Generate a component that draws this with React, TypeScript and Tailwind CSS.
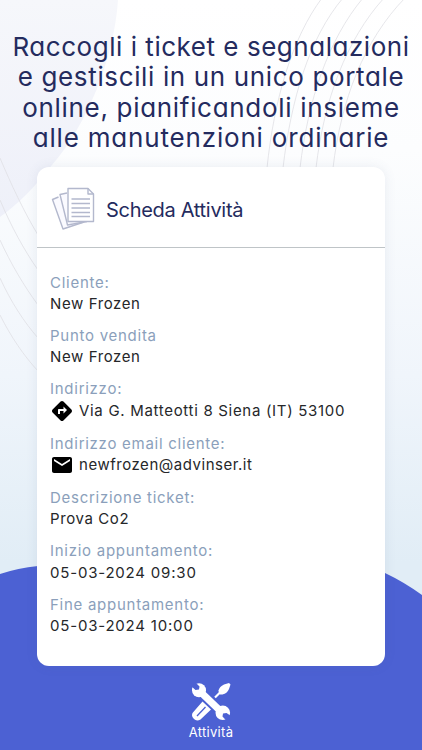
import React from 'react';
import { MdDirections, MdEmail } from 'react-icons/md';

const title = [
  { text: 'Raccogli i ticket e segnalazioni', cls: 'tracking-[0.53px]' },
  { text: 'e gestiscili in un unico portale', cls: 'tracking-[0.64px]' },
  { text: 'online, pianificandoli insieme', cls: 'tracking-[0.69px]' },
  { text: 'alle manutenzioni ordinarie', cls: 'tracking-[0.82px]' },
];

function Backdrop() {
  return (
    <svg className="absolute inset-0 h-full w-full" viewBox="0 0 422 750" fill="none">
      <defs>
        <linearGradient id="sky" x1="0" y1="0" x2="0" y2="1">
          <stop offset="0" stopColor="#ffffff" />
          <stop offset="0.2" stopColor="#fcfdfe" />
          <stop offset="0.5" stopColor="#f0f5fb" />
          <stop offset="0.75" stopColor="#e1edf6" />
        </linearGradient>
        <linearGradient id="disc" x1="0" y1="0" x2="0" y2="1">
          <stop offset="0" stopColor="#f6f7fb" />
          <stop offset="1" stopColor="#eef0f9" />
        </linearGradient>
      </defs>
      <rect width="422" height="750" fill="url(#sky)" />
      <path d="M0 0H118C114 60 86 126 52 165C35 187 18 204 0 217Z" fill="url(#disc)" />
      <g stroke="#dfe0e4" strokeWidth="0.8">
        <path d="M322 -2C292 38 274 100 267 168" />
        <path d="M343 -2C309 38 291 100 283 168" />
        <path d="M363 -2C328 40 308 100 300 168" />
        <path d="M384 -2C346 40 324 100 316 168" />
        <path d="M405 -2C364 40 341 100 333 168" />
        <path d="M0 158C11 184 24 212 38 235" />
        <path d="M0 200C11 226 24 250 38 270" />
        <path d="M0 240C11 264 24 286 38 305" />
        <path d="M0 278C11 302 24 322 38 338" />
        <path d="M0 315C11 337 24 356 38 371" />
      </g>
      <path d="M0 574Q18 568 38 566C170 530 300 535 385 573Q404 582 422 595V750H0Z" fill="#4c61d3" />
    </svg>
  );
}

function PapersIcon() {
  return (
    <svg className="h-[44px] w-[44px]" viewBox="0 0 44 44" fill="none" stroke="#b3b8cd" strokeWidth="1.4" strokeLinejoin="round">
      <path d="M7.500 10L1.500 12.500L12 42L33 35" fill="#fafaff" />
      <path d="M16 6L9 7.500L16.500 38L36 34.500" fill="#fafaff" />
      <path d="M17 1.500H37L42.500 7V34.500H17Z" fill="#fff" />
      <path d="M37 1.500V7H42.500" />
      <path d="M20.500 12H39M20.500 16.500H39M20.500 21H39M20.500 25.500H39M20.500 29.500H39" />
    </svg>
  );
}

function ToolsIcon() {
  return (
    <svg className="h-[38px] w-[40px]" viewBox="0 0 40 38" fill="none">
      <path d="M24 14.500L30 8.500" stroke="#fff" strokeWidth="2.200" />
      <path d="M28 10.500L27.500 7.500Q28.500 3.500 33 1.500L38 0L39.500 1.500L38 6Q36 10.500 31.500 11.500L29 11.500Z" fill="#fff" />
      <path d="M11.500 18.500L20 26.500L9.500 36.500Q5.500 38.500 3 36Q0 33.500 1.500 30Z" fill="#fff" />
      <path d="M14.500 24L6 33" stroke="#4c61d3" strokeWidth="1.300" />
      <path d="M8 8L31 29.500" stroke="#4c61d3" strokeWidth="9.500" />
      <path d="M8 7.500L31.500 30" stroke="#fff" strokeWidth="7.200" />
      <circle cx="8" cy="7.200" r="7" fill="#fff" />
      <circle cx="31.800" cy="29.800" r="7.300" fill="#fff" />
      <path d="M-1 2L3 -2L8.500 3.500L8 6.500L4.500 7Z" fill="#4c61d3" />
      <path d="M42 34.500L37 39.500L31.500 33.500L32 30.500L35.500 30Z" fill="#4c61d3" />
    </svg>
  );
}

function Field({ label, value, icon, spacing = 'tracking-[0.6px]' }: { label: string; value: string; icon?: React.ReactNode; spacing?: string }) {
  return (
    <div className={icon ? 'h-[54.4px]' : 'h-[53.3px]'}>
      <dt className="h-[22px] text-[15px] leading-[21px] tracking-[0.73px] text-[#8b9fbb]">{label}</dt>
      <dd className={'flex h-[21px] items-center text-[15px] text-[#26272a] ' + spacing}>
        {icon}
        <span>{value}</span>
      </dd>
    </div>
  );
}

export default function App() {
  return (
    <main className="relative h-[750px] w-[422px] overflow-hidden font-['Inter',sans-serif]">
      <Backdrop />
      <div className="relative flex h-full flex-col items-center">
        <h1 className="flex h-[167px] flex-col items-center pt-[32px] text-[26px] text-[#242b5e] [font-feature-settings:'cv11']">
          {title.map((l) => (
            <span key={l.text} className={'block h-[30.4px] whitespace-nowrap leading-[30.4px] ' + l.cls}>{l.text}</span>
          ))}
        </h1>
        <section className="h-[499px] w-[348px] shrink-0 rounded-[12px] bg-white shadow-[0_0_12px_rgba(80,100,140,0.10)]">
          <header className="flex h-[81px] items-center border-b border-[#bfc4c7] pl-[14px] pt-[3px]">
            <PapersIcon />
            <h2 className="ml-[11px] pt-[2px] text-[20px] tracking-[-0.3px] text-[#242b5e]">Scheda Attività</h2>
          </header>
          <dl className="px-[13px] pt-[23.7px]">
            <Field label="Cliente:" value="New Frozen" />
            <Field label="Punto vendita" value="New Frozen" />
            <Field label="Indirizzo:" value="Via G. Matteotti 8 Siena (IT) 53100" spacing="tracking-[0.69px]" icon={<MdDirections className="mr-[5px] h-[24px] w-[24px] text-black" />} />
            <Field label="Indirizzo email cliente:" value="newfrozen@advinser.it" spacing="tracking-[0.53px]" icon={<MdEmail className="mr-[5px] h-[24px] w-[24px] text-black" />} />
            <Field label="Descrizione ticket:" value="Prova Co2" />
            <Field label="Inizio appuntamento:" value="05-03-2024 09:30" spacing="tracking-[0.8px]" />
            <Field label="Fine appuntamento:" value="05-03-2024 10:00" spacing="tracking-[0.8px]" />
          </dl>
        </section>
        <nav className="flex flex-col items-center pt-[17px] text-white">
          <ToolsIcon />
          <span className="mt-[1px] text-[13px] leading-[20px] tracking-[0.3px]">Attività</span>
        </nav>
      </div>
    </main>
  );
}
